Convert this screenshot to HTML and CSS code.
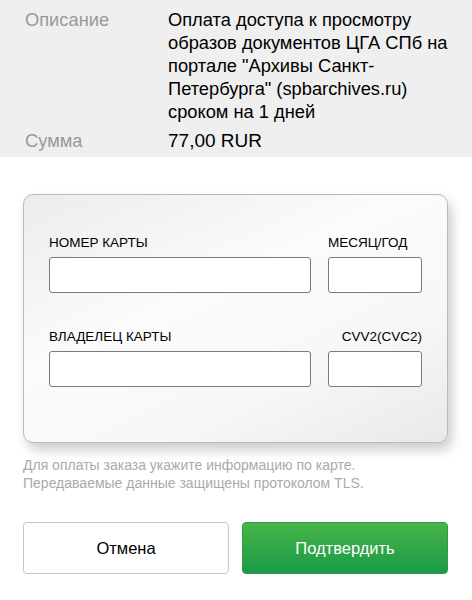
FILE: index.html
```html
<!DOCTYPE html>
<html lang="ru">
<head>
<meta charset="UTF-8">
<title>Оплата</title>
<link rel="stylesheet" href="styles.css">
</head>
<body>
<section class="order">
    <div class="order-row">
        <div class="order-label">Описание</div>
        <div class="order-value">Оплата доступа к просмотру образов документов ЦГА СПб на портале "Архивы Санкт-Петербурга" (spbarchives.ru) сроком на 1 дней</div>
    </div>
    <div class="order-row sum">
        <div class="order-label">Сумма</div>
        <div class="order-value">77,00 RUR</div>
    </div>
</section>
<main class="pay">
    <form class="card" id="cardForm">
        <div class="card-row">
            <label class="field wide">НОМЕР КАРТЫ
                <input type="text" id="pan">
            </label>
            <label class="field short">МЕСЯЦ/ГОД
                <input type="text" id="exp">
            </label>
        </div>
        <div class="card-row">
            <label class="field wide">ВЛАДЕЛЕЦ КАРТЫ
                <input type="text" id="holder">
            </label>
            <label class="field short right">CVV2(CVC2)
                <input type="password" id="cvv">
            </label>
        </div>
    </form>
    <p class="note">Для оплаты заказа укажите информацию по карте.<br>Передаваемые данные защищены протоколом TLS.</p>
    <div class="actions">
        <button type="button" class="btn cancel">Отмена</button>
        <button type="submit" form="cardForm" class="btn ok">Подтвердить</button>
    </div>
</main>
</body>
</html>
```
FILE: styles.css
```css
body{
    font-family:"Liberation Sans","DejaVu Sans",sans-serif;
    margin:0;
    background:#fff;
    color:#000;
}
.order{
    background:#efefef;
    padding:8px 0 5px 25px;
}
.order-row{
    display:flex;
    font-size:18.3px;
    line-height:23px;
}
.order-row.sum{margin-top:6px;}
.order-row.sum .order-value{font-size:19px;}
.order-label{
    width:143px;
    flex:none;
    color:#999;
}
.order-value{flex:1;padding-right:20px;}
.pay{padding:37px 24px 0 23px;}
.card{
    height:249px;
    box-sizing:border-box;
    padding:40px 25px 0 25px;
    border:1px solid #b9b9b9;
    border-radius:10px;
    background:linear-gradient(155deg,#ececec 0%,#fbfbfb 40%,#f7f7f7 70%,#e9e9ea 100%);
    box-shadow:4px 7px 12px rgba(0,0,0,0.2);
}
.card-row{
    display:flex;
    justify-content:space-between;
    margin-bottom:36px;
}
.field{
    display:flex;
    flex-direction:column;
    font-size:13.5px;
    line-height:16px;
    gap:6px;
}
.field.wide{width:262px;}
.field.short{width:94px;}
.field.right{text-align:right;}
input{
    height:36px;
    box-sizing:border-box;
    border:1px solid #7a7a7a;
    border-radius:3px;
    background:#fff;
    font-size:14px;
    padding:0 8px;
}
.note{
    margin:13px 0 0;
    font-size:14px;
    line-height:18px;
    color:#aaa;
}
.actions{
    display:flex;
    gap:13px;
    margin-top:30px;
}
.btn{
    flex:1;
    height:52px;
    font-family:inherit;
    font-size:16.5px;
    border-radius:4px;
    cursor:pointer;
}
.cancel{
    background:#fff;
    border:1px solid #c8c8c8;
    color:#000;
}
.ok{
    background:linear-gradient(#48b548,#199a47);
    border:1px solid #2f9c42;
    color:#fff;
}
```
